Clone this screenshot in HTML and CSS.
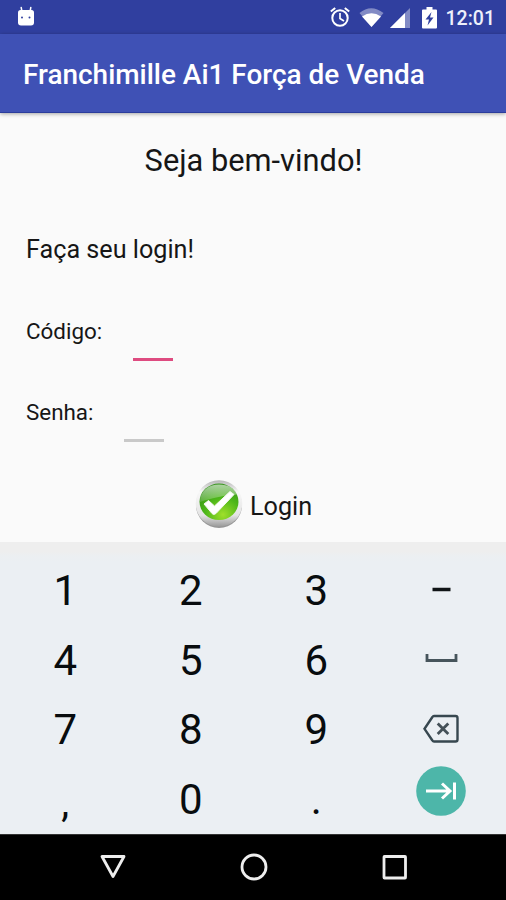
FILE: index.html
```html
<!DOCTYPE html>
<html lang="pt-BR">
<head>
<meta charset="utf-8">
<title>Franchimille Ai1 Força de Venda</title>
<link rel="stylesheet" href="styles.css">
</head>
<body>
<div class="phone">
  <div class="status">
    <svg class="droid" width="20" height="22" viewBox="0 0 20 22"><path d="M5.2 1.5 6 6M14.8 1.5 14 6" stroke="#fff" stroke-width="1.5" stroke-linecap="round"/><path d="M2 6.500Q2 4 4.500 4h11Q18 4 18 6.500V16.500q0 3-3 3H5q-3 0-3-3z" fill="#fff"/><circle cx="6" cy="11.500" r="1" fill="#30409f"/><circle cx="13.500" cy="11.500" r="1" fill="#30409f"/></svg>
    <svg class="indicators" width="112" height="26" viewBox="0 0 112 26">
      <g fill="none" stroke="#fff" stroke-width="2"><circle cx="10" cy="14" r="7.700"/><path d="M10 9v5.500l4 2.500" stroke-width="1.700"/><path d="M.8 7.600 5.200 4M19.200 7.600 14.800 4"/></g>
      <path d="M29.500 9Q41 -.5 53.500 9L41.500 23z" fill="#fff" opacity=".4"/>
      <path d="M32 12.500Q41.500 6 51 12.500L41.500 23z" fill="#fff"/>
      <path d="M60 24 80 4v20z" fill="#fff" opacity=".4"/>
      <path d="M60 24 75 9v15z" fill="#fff"/>
      <path d="M93 5.500h3.500V3h6v2.500h3.500q1 0 1 1v17q0 1-1 1H93q-1 0-1-1v-17q0-1 1-1z" fill="#fff"/>
      <path d="M101.500 8 95.500 15.500h3.500l-1.500 6L103.500 13.500H100z" fill="#30409f"/>
    </svg>
    <span class="clock">12:01</span>
  </div>
  <header class="appbar">Franchimille Ai1 Força de Venda</header>
  <main class="content">
    <h1 class="welcome">Seja bem-vindo!</h1>
    <h2 class="prompt">Faça seu login!</h2>
    <div class="field code"><label for="code">Código:</label><input id="code" type="text"></div>
    <div class="field pass"><label for="pass">Senha:</label><input id="pass" type="password"></div>
    <button class="login">
      <svg width="50" height="50" viewBox="0 0 50 50">
        <defs>
          <linearGradient id="rim" x1="0" y1="0" x2="0" y2="1"><stop offset="0" stop-color="#b5b5b5"/><stop offset=".25" stop-color="#f8f8f8"/><stop offset=".75" stop-color="#e4e4e4"/><stop offset="1" stop-color="#999"/></linearGradient>
          <radialGradient id="green" cx=".6" cy=".85" r=".9"><stop offset="0" stop-color="#9fdf2b"/><stop offset=".5" stop-color="#4eb719"/><stop offset="1" stop-color="#2f8a18"/></radialGradient>
          <linearGradient id="gloss" x1="0" y1="0" x2="0" y2="1"><stop offset="0" stop-color="#fff" stop-opacity=".6"/><stop offset="1" stop-color="#fff" stop-opacity=".15"/></linearGradient>
        </defs>
        <circle cx="25" cy="25" r="23" fill="#959595"/>
        <circle cx="25" cy="23.500" r="23.300" fill="url(#rim)"/>
        <ellipse cx="25" cy="21.800" rx="19.500" ry="18.300" fill="url(#green)"/>
        <path d="M6 22C6 11 14 4.500 25 4.500c9 0 16 4 18 10C32 15 18 18 6 22z" fill="url(#gloss)"/>
        <path d="M10 24 14.500 20.500l6 5.500L36 11.500l4 3L22 33.500q-2.500 2-4 0z" fill="#fff" stroke="#f2f7ef" stroke-width="1"/>
      </svg>
      <span>Login</span>
    </button>
  </main>
  <section class="keyboard">
    <div class="key">1</div><div class="key">2</div><div class="key">3</div>
    <div class="key icon"><svg width="36" height="24" viewBox="0 0 36 24"><path d="M9.500 11.500h18" stroke="#101416" stroke-width="3.500"/></svg></div>
    <div class="key">4</div><div class="key">5</div><div class="key">6</div>
    <div class="key icon"><svg width="36" height="24" viewBox="0 0 36 24"><path d="M4 6v6.500h29V6" fill="none" stroke="#46545b" stroke-width="2.800"/></svg></div>
    <div class="key">7</div><div class="key">8</div><div class="key">9</div>
    <div class="key icon"><svg width="38" height="30" viewBox="0 0 38 30"><path d="M12 2h21.500q2 0 2 2v21.500q0 2-2 2H12q-1 0-1.600-1L2.500 14.800 10.400 3q.6-1 1.600-1z" fill="none" stroke="#37474f" stroke-width="2.400"/><path d="m15.700 9.500 10.600 10.600m0-10.600L15.700 20.100" stroke="#455158" stroke-width="2.800"/></svg></div>
    <div class="key comma">,</div><div class="key">0</div><div class="key">.</div>
    <div class="key icon next"><svg width="50" height="50" viewBox="0 0 50 50"><circle cx="25" cy="25" r="24.800" fill="#4db6a9"/><path d="M10 25h23M26 17.500l8 7.500-8 7.500M38.500 16.500v17" fill="none" stroke="#fff" stroke-width="3"/></svg></div>
  </section>
  <nav class="navbar">
    <svg width="28" height="28" viewBox="0 0 28 28"><path d="M3 3.500h22L14 23.500z"/></svg>
    <svg width="28" height="28" viewBox="0 0 28 28"><circle cx="14" cy="14" r="12"/></svg>
    <svg width="28" height="28" viewBox="0 0 28 28"><rect x="3" y="3.500" width="21.500" height="21.500" rx=".5"/></svg>
  </nav>
</div>
</body>
</html>
```
FILE: styles.css
```css
* { box-sizing: border-box; }
body { margin: 0; font-family: Roboto, "Liberation Sans", sans-serif; color: #161616; background: #fafafa; }
svg { display: block; flex: none; }
.phone { width: 506px; height: 900px; display: flex; flex-direction: column; overflow: hidden; }
.status { height: 34px; flex: none; background: #303f9f; display: flex; align-items: center; padding: 0 11px 0 16px; color: #eef0fb; }
.droid { margin-bottom: 1px; }
.indicators { margin-left: auto; margin-right: 4px; }
.clock { font-size: 19.500px; font-weight: 500; line-height: 34px; padding-top: 3px; }
.appbar { height: 79px; flex: none; background: #3f51b5; border-bottom: 1px solid #2b3d9c; color: #fff; font-size: 27.950px; font-weight: 500; line-height: 82px; padding-left: 23px; white-space: nowrap; box-shadow: 0 1px 4px rgba(0, 0, 0, .35); z-index: 1; }
.content { height: 429px; flex: none; background: #fafafa; display: flex; flex-direction: column; }
.welcome { margin: 28px 0 0 1px; font-size: 30.800px; font-weight: 400; line-height: 40px; text-align: center; }
.prompt { margin: 51px 0 0 26px; font-size: 25.200px; font-weight: 400; line-height: 36px; }
.field { display: flex; align-items: flex-start; height: 60px; margin-left: 26px; font-size: 22.400px; line-height: 30px; }
.code { margin-top: 48px; }
.pass { margin-top: 21px; }
.field input { width: 40px; height: 44px; margin-left: 31px; padding: 0; border: 0; border-bottom: 3px solid #de4b80; background: none; outline: 0; }
.code input { height: 45px; }
.pass input { border-color: #c9c9c9; height: 45px; }
.login { align-self: flex-start; margin: 23px 0 0 194px; padding: 0; border: 0; background: none; display: flex; align-items: center; gap: 6px; font: 400 25.200px/36px Roboto, sans-serif; color: #161616; }
.login span { padding-top: 4px; }
.keyboard { height: 292px; flex: none; padding: 13px 2px 0; background: linear-gradient(#eeeeee 0 10px, #eceff1 13px, #ebeff3 20px); display: grid; grid-template-columns: repeat(4, 1fr); grid-template-rows: repeat(4, 69.800px); }
.key { display: flex; align-items: center; justify-content: center; font-size: 42px; line-height: 1; color: #080c0e; padding: 2px 0 0 1px; }
.icon { padding: 0; }
.comma { font-size: 40px; padding-top: 7px; }
.next { align-items: flex-start; padding-top: 2px; }
.navbar { flex: 1; background: #000; border-top: 1px solid #333; display: flex; justify-content: center; align-items: center; gap: 113px; padding: 0 0 2px 1px; }
.navbar svg { fill: none; stroke: #eee; stroke-width: 2.800; stroke-linejoin: round; }
```
